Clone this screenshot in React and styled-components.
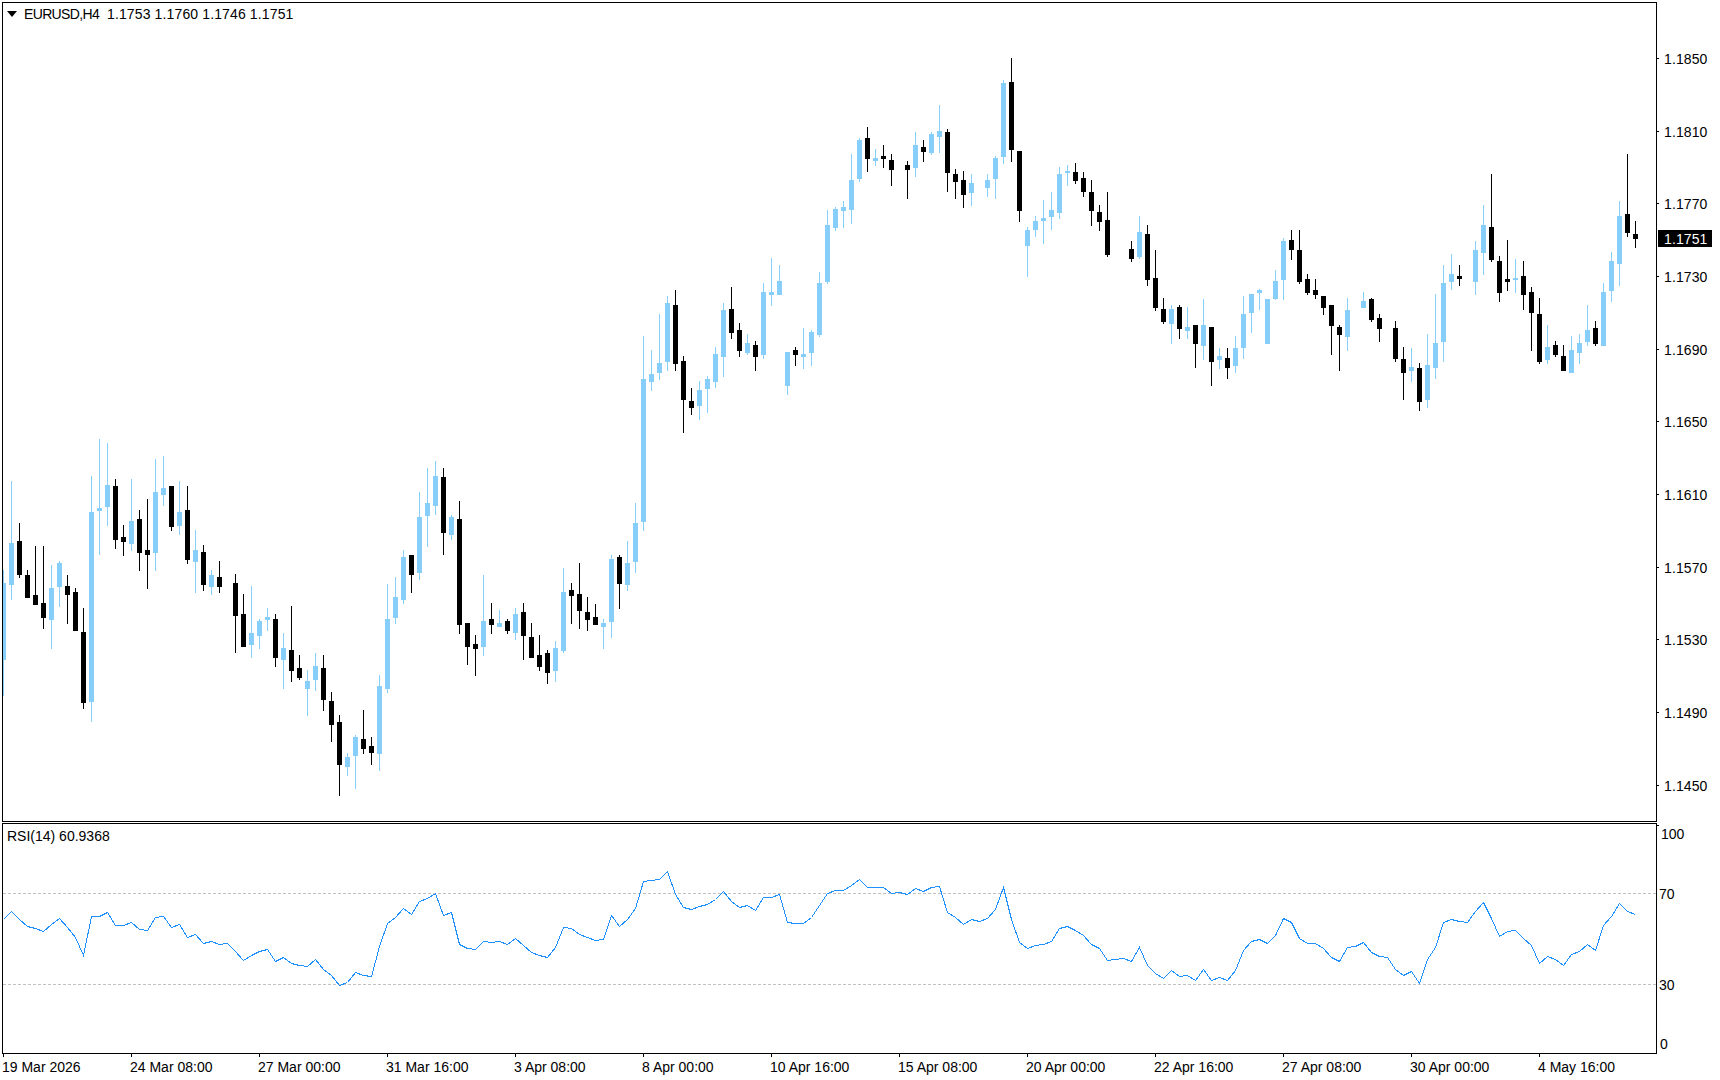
import React from 'react';
import styled, { createGlobalStyle } from 'styled-components';

// candle rows: [colour, high, body top, body bottom, low], null where the bar is blank.
// y values are in thirds of a pixel, measured from the band's own top edge
const L = 1;
const B = 0;
const candleBands = [
  { top: 430, rows: [
    [L,420,459,690,798],[L,153,339,465,510],[B,279,333,435,444],[B,420,435,504,504],[B,348,495,525,525],
    [B,348,519,564,597],[L,405,474,570,657],[L,393,399,471,531],[B,435,468,495,582],[B,474,486,603,603],
    [B,534,606,819,837],[L,138,246,816,876],[L,27,234,243,375],[L,39,165,231,288],[B,147,168,330,357],
    [B,285,321,336,378],[L,147,273,342,363],[B,240,267,369,423],[B,207,360,375,477],[L,87,186,369,423],
    [L,78,174,195,228],[B,168,168,291,303],[L,153,246,288,315],[B,168,240,390,402],[L,300,360,396,489],
    [B,345,366,465,483],[L,420,435,471,495],[B,393,441,471,489],null,[B,432,459,558,669],
    [B,492,552,651,651],[L,468,609,645,684],[L,567,573,618,657],[L,534,561,570,603],[B,552,567,684,711],
    [L,609,654,690,777],[B,528,660,723,756],[B,675,714,744,750],[L,720,753,777,858],[L,669,708,750,783],
    [B,675,714,810,843],[B,786,813,885,936],[B,855,876,1005,1098],[L,969,981,1011,1038],[L,915,921,978,1077],
    [B,840,927,957,972],[B,921,948,969,1005],[L,735,768,972,1023],[L,462,567,777,789],[L,441,501,564,582],
    [L,360,381,510,522],[B,375,375,435,489],[L,186,261,429,450],[L,114,219,258,351],
  ] },
  { top: 420, rows: [
    [L,123,168,258,285],[B,144,171,339,405],[L,285,291,345,360],[B,243,297,615,642],[B,609,609,681,735],
    [B,645,672,687,768],[L,465,603,681,708],[B,549,597,615,642],[L,570,609,621,621],[B,597,603,633,642],
    [L,564,582,639,660],[B,549,576,648,720],[B,609,651,714,714],[B,645,705,741,753],[B,690,699,759,792],
    [L,663,684,753,786],[L,444,516,693,699],[B,489,510,528,612],[B,429,522,573,627],[B,531,576,600,633],
    [B,552,591,615,615],[L,597,609,621,687],[L,405,417,606,654],[B,405,411,492,567],[L,363,429,495,513],
    [L,249,309,426,459],
  ] },
  { top: 50, rows: [
    [L,858,987,1416,1443],[L,900,972,996,1023],[L,792,939,969,990],[L,738,759,936,963],[B,720,765,942,963],
    [B,918,933,1050,1149],[B,1014,1053,1074,1095],[L,993,1020,1068,1110],[L,978,987,1017,1089],[L,891,912,996,1014],
    [L,759,780,921,981],[B,711,777,849,867],[B,819,840,903,921],[L,852,879,909,915],[B,873,885,921,963],
    [L,699,726,915,927],[L,624,726,735,768],[L,645,693,735,735],[L,906,906,1008,1035],[B,891,900,915,948],
    [L,834,912,921,957],[L,840,846,909,948],[L,666,699,855,861],[L,480,525,696,702],[L,471,477,534,543],
    [L,453,471,483,534],[L,312,390,480,522],[L,264,270,387,396],[B,231,264,327,366],[L,297,324,333,348],
    [B,285,318,327,354],[B,312,330,360,408],null,[B,333,345,360,447],[L,246,285,354,381],
    [B,270,291,306,336],[L,246,252,309,315],[L,165,243,261,309],[B,237,246,369,426],[B,357,372,396,447],
    [B,363,390,435,474],[L,372,399,429,468],null,[L,372,390,414,441],[L,318,324,387,447],
    [L,90,99,321,342],[B,24,96,300,336],[B,303,303,483,516],[L,531,540,588,681],[L,498,513,540,561],
    [L,450,504,513,582],[L,426,480,501,540],[L,351,372,489,507],[L,345,363,369,408],
  ] },
  { top: 150, rows: [
    [B,39,66,93,102],[B,66,84,126,141],[B,90,126,183,228],[B,165,186,216,243],[B,126,210,315,321],
    null,null,[B,273,297,327,336],[L,198,246,321,327],[B,225,252,390,408],
    [B,300,384,474,483],[B,444,477,516,522],[L,465,477,522,582],[B,465,471,537,567],[L,471,531,543,567],
    [B,525,525,582,654],[L,447,525,588,630],[B,531,531,636,708],[L,594,618,630,657],[B,594,624,654,687],
    [L,558,594,648,669],[L,438,492,594,627],[L,432,432,489,549],[L,417,420,429,480],[L,447,447,582,582],
    [L,360,393,447,450],[L,264,273,390,450],[B,240,270,300,330],[B,240,300,396,402],
  ] },
  { top: 140, rows: [
    [B,402,417,459,465],[B,417,450,465,477],[B,468,468,504,525],[B,495,495,558,645],[B,555,561,585,693],
    [L,474,510,591,633],null,[L,456,483,504,504],[B,474,477,540,546],[B,522,534,567,606],
    null,[B,543,564,657,666],[B,621,657,699,780],[L,624,681,693,726],[B,669,684,786,813],
    [L,582,675,780,804],[L,462,609,684,717],[L,375,429,606,666],[L,342,402,426,450],[B,375,408,417,438],
    null,[L,303,330,426,465],[L,195,255,339,405],[B,102,261,360,366],[B,348,363,459,486],
    [B,300,417,426,453],[L,357,414,420,459],[B,363,408,465,510],[B,441,456,519,633],[B,474,522,666,672],
    [L,555,621,660,672],[B,603,615,645,651],[B,615,648,693,693],[L,588,630,699,699],[L,582,609,639,672],
    [L,495,570,606,618],[B,543,564,612,618],[L,429,456,618,618],[L,336,363,453,486],[L,183,228,372,438],
    [B,42,222,279,291],[B,243,282,297,324],
  ] },
];

const rsiBands = [
  { top: 810, rows: [
    326,304,327,349,354,364,342,325,352,382,435,319,319,307,346,346,337,358,361,322,318,352,343,381,373,400,394,
    403,400,424,451,436,424,418,453,441,460,466,469,448,478,496,526,517,487,495,498,408,339,322,295,313,274,264,
  ] },
  { top: 860, rows: [
    100,165,156,251,265,268,243,247,243,253,235,255,277,286,292,260,202,205,223,232,241,238,166,199,178,145,64,60,
    58,34,103,142,148,138,132,118,94,124,142,135,151,112,112,101,186,190,190,172,136,99,91,91,76,56,
    82,82,82,99,97,103,85,94,82,79,157,172,193,178,184,175,148,82,178,247,265,255,253,244,205,199,211,226,253,264,
    301,298,295,304,262,316,340,355,331,349,346,361,328,361,352,361,331,271,244,238,250,226,175,187,
    235,250,250,265,292,304,262,259,247,275,289,292,328,346,334,370,298,262,187,178,184,187,154,127,175,229,214,211,235,
  ] },
  { top: 800, rows: [436,490,469,478,496,463,454,433,451,376,349,310,334,343] },
];

const barX = (i) => 3 + 8 * i;
const toY = (top, v) => Math.round(top + v / 3);

const candles = candleBands.flatMap(({ top, rows }) =>
  rows.map((r) => r && { bull: r[0] === L, high: toY(top, r[1]), open: toY(top, r[2]), close: toY(top, r[3]), low: toY(top, r[4]) })
);

const rsiPoints = rsiBands
  .flatMap(({ top, rows }) => rows.map((v) => toY(top, v)))
  .map((y, i) => `${barX(i) + 0.5},${y + 0.5}`)
  .join(' ');

const priceLevels = ['1.1850', '1.1810', '1.1770', '1.1730', '1.1690', '1.1650', '1.1610', '1.1570', '1.1530', '1.1490', '1.1450'];
const timeLabels = [
  '19 Mar 2026', '24 Mar 08:00', '27 Mar 00:00', '31 Mar 16:00', '3 Apr 08:00', '8 Apr 00:00', '10 Apr 16:00',
  '15 Apr 08:00', '20 Apr 00:00', '22 Apr 16:00', '27 Apr 08:00', '30 Apr 00:00', '4 May 16:00',
];

const App = () => (
  <Page>
    <GlobalStyle />
    <ChartRow>
      <PricePane>
        <Legend>
          <svg width="10" height="6" viewBox="0 0 10 6"><polygon points="0,0 10,0 5,6" fill="#000" /></svg>
          <Symbol>EURUSD,H4</Symbol>
          <Quotes>1.1753 1.1760 1.1746 1.1751</Quotes>
        </Legend>
        <ChartSvg width="1653" height="818" viewBox="3 3 1653 818">
          {candles.map((c, i) => c && (
            <g key={i}>
              <CandlePart $bull={c.bull} x={barX(i)} y={c.high} width="1" height={c.low - c.high} />
              <CandlePart $bull={c.bull} x={barX(i) - 2} y={c.open} width="5" height={c.close - c.open} />
            </g>
          ))}
        </ChartSvg>
      </PricePane>
      <PriceAxis>
        {priceLevels.map((p) => (
          <PriceRow key={p}><AxisTick /><AxisText>{p}</AxisText></PriceRow>
        ))}
        <PriceTag>1.1751</PriceTag>
      </PriceAxis>
    </ChartRow>
    <IndicatorRow>
      <RsiPane>
        <RsiLegend>RSI(14) 60.9368</RsiLegend>
        <ChartSvg width="1653" height="229" viewBox="3 824 1653 229">
          <LevelLine x1="3" x2="1656" y1="893.5" y2="893.5" />
          <LevelLine x1="3" x2="1656" y1="984.5" y2="984.5" />
          <RsiLine points={rsiPoints} />
        </ChartSvg>
      </RsiPane>
      <RsiAxis>
        <AxisTick />
        <RsiLabel $gap={0} $indent={4}>100</RsiLabel>
        <RsiLabel $gap={44} $indent={2}>70</RsiLabel>
        <RsiLabel $gap={75} $indent={2}>30</RsiLabel>
        <RsiLabel $gap={43} $indent={3}>0</RsiLabel>
      </RsiAxis>
    </IndicatorRow>
    <TimeAxis>
      {timeLabels.map((t) => (
        <TimeSlot key={t}><TimeTick /><TimeText>{t}</TimeText></TimeSlot>
      ))}
    </TimeAxis>
  </Page>
);

export default App;

const GlobalStyle = createGlobalStyle`
  html, body {
    margin: 0;
    background: #fff;
    overflow: hidden;
  }
`;

const Page = styled.div`
  width: 1720px;
  height: 1080px;
  box-sizing: border-box;
  padding: 2px 0 0 2px;
  background: #fff;
  color: #000;
  font-family: 'Liberation Sans', Arial, sans-serif;
  font-size: 14px;
  line-height: 16px;
`;

const ChartRow = styled.div`
  display: flex;
  height: 820px;
`;

const PricePane = styled.div`
  position: relative;
  flex: none;
  width: 1655px;
  height: 820px;
  box-sizing: border-box;
  border: 1px solid #000;
`;

const ChartSvg = styled.svg`
  display: block;
  shape-rendering: crispEdges;
`;

const CandlePart = styled.rect`
  fill: ${(props) => (props.$bull ? '#87cefa' : '#000')};
`;

const Legend = styled.div`
  position: absolute;
  top: 3px;
  left: 4px;
  display: flex;
  align-items: center;
`;

const Symbol = styled.span`
  width: 83px;
  margin-left: 7px;
  letter-spacing: -0.65px;
  white-space: nowrap;
`;

const Quotes = styled.span`
  letter-spacing: 0.13px;
  white-space: nowrap;
`;

const PriceAxis = styled.div`
  position: relative;
  padding-top: 20px;
`;

const PriceRow = styled.div`
  display: flex;
  align-items: center;
  height: 72.7px;
`;

const AxisTick = styled.div`
  flex: none;
  width: 2px;
  height: 1px;
  background: #000;
`;

const AxisText = styled.span`
  margin: 1px 0 0 5px;
  letter-spacing: 0.1px;
  white-space: nowrap;
`;

const PriceTag = styled.div`
  position: absolute;
  top: 228px;
  left: 1px;
  width: 54px;
  height: 17px;
  box-sizing: border-box;
  padding-left: 6px;
  background: #000;
  color: #fff;
  line-height: 19px;
  letter-spacing: 0.1px;
`;

const IndicatorRow = styled.div`
  display: flex;
  height: 231px;
  margin-top: 1px;
`;

const RsiPane = styled.div`
  position: relative;
  flex: none;
  width: 1655px;
  height: 231px;
  box-sizing: border-box;
  border: 1px solid #000;
`;

const RsiLegend = styled.div`
  position: absolute;
  top: 4px;
  left: 4px;
`;

const LevelLine = styled.line`
  stroke: #c0c0c0;
  stroke-width: 1;
  stroke-dasharray: 3 2;
`;

const RsiLine = styled.polyline`
  fill: none;
  stroke: #1e90ff;
  stroke-width: 1;
`;

const RsiAxis = styled.div`
  display: flex;
  flex-direction: column;
  padding-top: 2px;
`;

const RsiLabel = styled.div`
  height: 16px;
  margin-top: ${(props) => props.$gap}px;
  padding-left: ${(props) => props.$indent}px;
`;

const TimeAxis = styled.div`
  display: flex;
  padding-left: 1px;
`;

const TimeSlot = styled.div`
  flex: none;
  width: 128px;
  display: flex;
  flex-direction: column;
  align-items: flex-start;
  gap: 2px;
`;

const TimeTick = styled.div`
  width: 1px;
  height: 3px;
  background: #000;
`;

const TimeText = styled.span`
  margin-left: -1px;
  white-space: nowrap;
`;
